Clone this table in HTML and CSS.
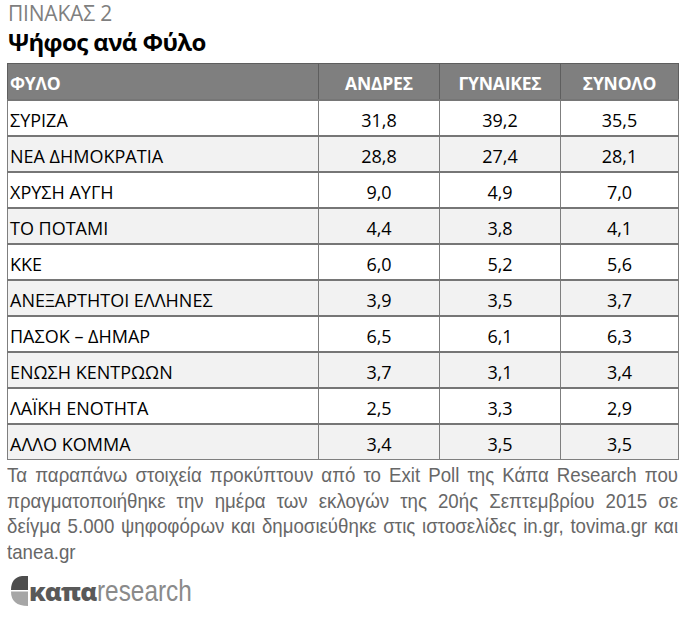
FILE: index.html
```html
<!DOCTYPE html>
<html lang="el">
<head>
<meta charset="utf-8">
<link rel="stylesheet" href="styles.css">
</head>
<body>
<div class="page">
  <div class="kicker">ΠΙΝΑΚΑΣ 2</div>
  <h1 class="title">Ψήφος ανά Φύλο</h1>
  <table class="data">
    <colgroup>
      <col class="c-name"><col class="c-num"><col class="c-num"><col class="c-last">
    </colgroup>
    <thead>
      <tr><th class="name">ΦΥΛΟ</th><th>ΑΝΔΡΕΣ</th><th>ΓΥΝΑΙΚΕΣ</th><th>ΣΥΝΟΛΟ</th></tr>
    </thead>
    <tbody>
      <tr><td class="name">ΣΥΡΙΖΑ</td><td>31,8</td><td>39,2</td><td>35,5</td></tr>
      <tr><td class="name">ΝΕΑ ΔΗΜΟΚΡΑΤΙΑ</td><td>28,8</td><td>27,4</td><td>28,1</td></tr>
      <tr><td class="name">ΧΡΥΣΗ ΑΥΓΗ</td><td>9,0</td><td>4,9</td><td>7,0</td></tr>
      <tr><td class="name">ΤΟ ΠΟΤΑΜΙ</td><td>4,4</td><td>3,8</td><td>4,1</td></tr>
      <tr><td class="name">ΚΚΕ</td><td>6,0</td><td>5,2</td><td>5,6</td></tr>
      <tr><td class="name">ΑΝΕΞΑΡΤΗΤΟΙ ΕΛΛΗΝΕΣ</td><td>3,9</td><td>3,5</td><td>3,7</td></tr>
      <tr><td class="name">ΠΑΣΟΚ – ΔΗΜΑΡ</td><td>6,5</td><td>6,1</td><td>6,3</td></tr>
      <tr><td class="name">ΕΝΩΣΗ ΚΕΝΤΡΩΩΝ</td><td>3,7</td><td>3,1</td><td>3,4</td></tr>
      <tr><td class="name">ΛΑΪΚΗ ΕΝΟΤΗΤΑ</td><td>2,5</td><td>3,3</td><td>2,9</td></tr>
      <tr><td class="name">ΑΛΛΟ ΚΟΜΜΑ</td><td>3,4</td><td>3,5</td><td>3,5</td></tr>
    </tbody>
  </table>
  <div class="note-wrap">
    <p class="note">Τα παραπάνω στοιχεία προκύπτουν από το Exit Poll της Κάπα Research που<br>πραγματοποιήθηκε την ημέρα των εκλογών της 20ής Σεπτεμβρίου 2015 σε<br>δείγμα 5.000 ψηφοφόρων και δημοσιεύθηκε στις ιστοσελίδες in.gr, tovima.gr και<br>tanea.gr</p>
  </div>
  <div class="logo">
    <svg class="logo-mark" width="17" height="30" viewBox="0 0 17 30">
      <path d="M17 0 L17 14 L0 14 Q0 1.5 11 0 Z" fill="#4d4d4d"/>
      <path d="M17 15.5 L17 30 Q0 30 0 15.5 Z" fill="#a6a6a6"/>
    </svg>
    <span class="logo-bold">καπα</span><span class="logo-light">research</span>
  </div>
</div>
</body>
</html>
```
FILE: styles.css
```css
html, body {
  margin: 0;
  padding: 0;
  background: #ffffff;
}
.page {
  width: 680px;
  padding: 0 0 4px 7px;
  overflow: hidden;
  font-family: "Open Sans", "Noto Sans", sans-serif;
}
.kicker {
  color: #7f7f7f;
  font-size: 21px;
  line-height: 26px;
  margin-left: 1px;
  letter-spacing: -0.2px;
}
.title {
  margin: 0 0 0 1px;
  font-size: 24px;
  line-height: 32px;
  font-weight: 700;
  color: #000;
  letter-spacing: -0.6px;
}
.data {
  width: 671px;
  border-collapse: collapse;
  margin-top: 5px;
  table-layout: fixed;
  font-size: 18px;
  color: #000;
}
.c-name { width: 311px; }
.c-num { width: 121px; }
.c-last { width: 118px; }
.data th, .data td {
  border: 1px solid #7f7f7f;
  height: 36px;
  padding: 4px 4px 0;
  text-align: center;
  vertical-align: middle;
  box-sizing: border-box;
  line-height: 24px;
}
.data th {
  background: #7f7f7f;
  color: #fff;
  font-weight: 700;
  font-size: 17.5px;
  letter-spacing: -0.2px;
  border-color: #5e5e5e;
  padding-top: 4px;
}
.data td {
  border-top: 2px solid #767676;
}
.data .name {
  text-align: left;
  padding-left: 2px;
}
.data tbody tr:nth-child(even) td {
  background: #f2f2f2;
}
.note-wrap {
  width: 671px;
  margin-top: 2px;
}
.note {
  margin: 0;
  width: 754px;
  transform: scaleX(0.89);
  transform-origin: left top;
  font-family: "Liberation Sans", Arial, sans-serif;
  font-size: 21px;
  line-height: 25.5px;
  color: #676767;
  text-align: justify;
  text-align-last: justify;
}
.logo {
  display: flex;
  align-items: center;
  margin: 11px 0 0 4px;
  height: 32px;
}
.logo-mark {
  margin-right: 1px;
  display: block;
}
.logo-bold {
  font-family: "Open Sans", sans-serif;
  font-weight: 800;
  font-size: 25.5px;
  line-height: 32px;
  color: #595959;
  letter-spacing: -1px;
}
.logo-light {
  display: inline-block;
  font-family: "Liberation Sans", Arial, sans-serif;
  font-size: 29px;
  line-height: 32px;
  color: #8a8a8a;
  font-weight: 400;
  transform: scaleX(0.84);
  transform-origin: left center;
  margin-left: 1px;
}
```
